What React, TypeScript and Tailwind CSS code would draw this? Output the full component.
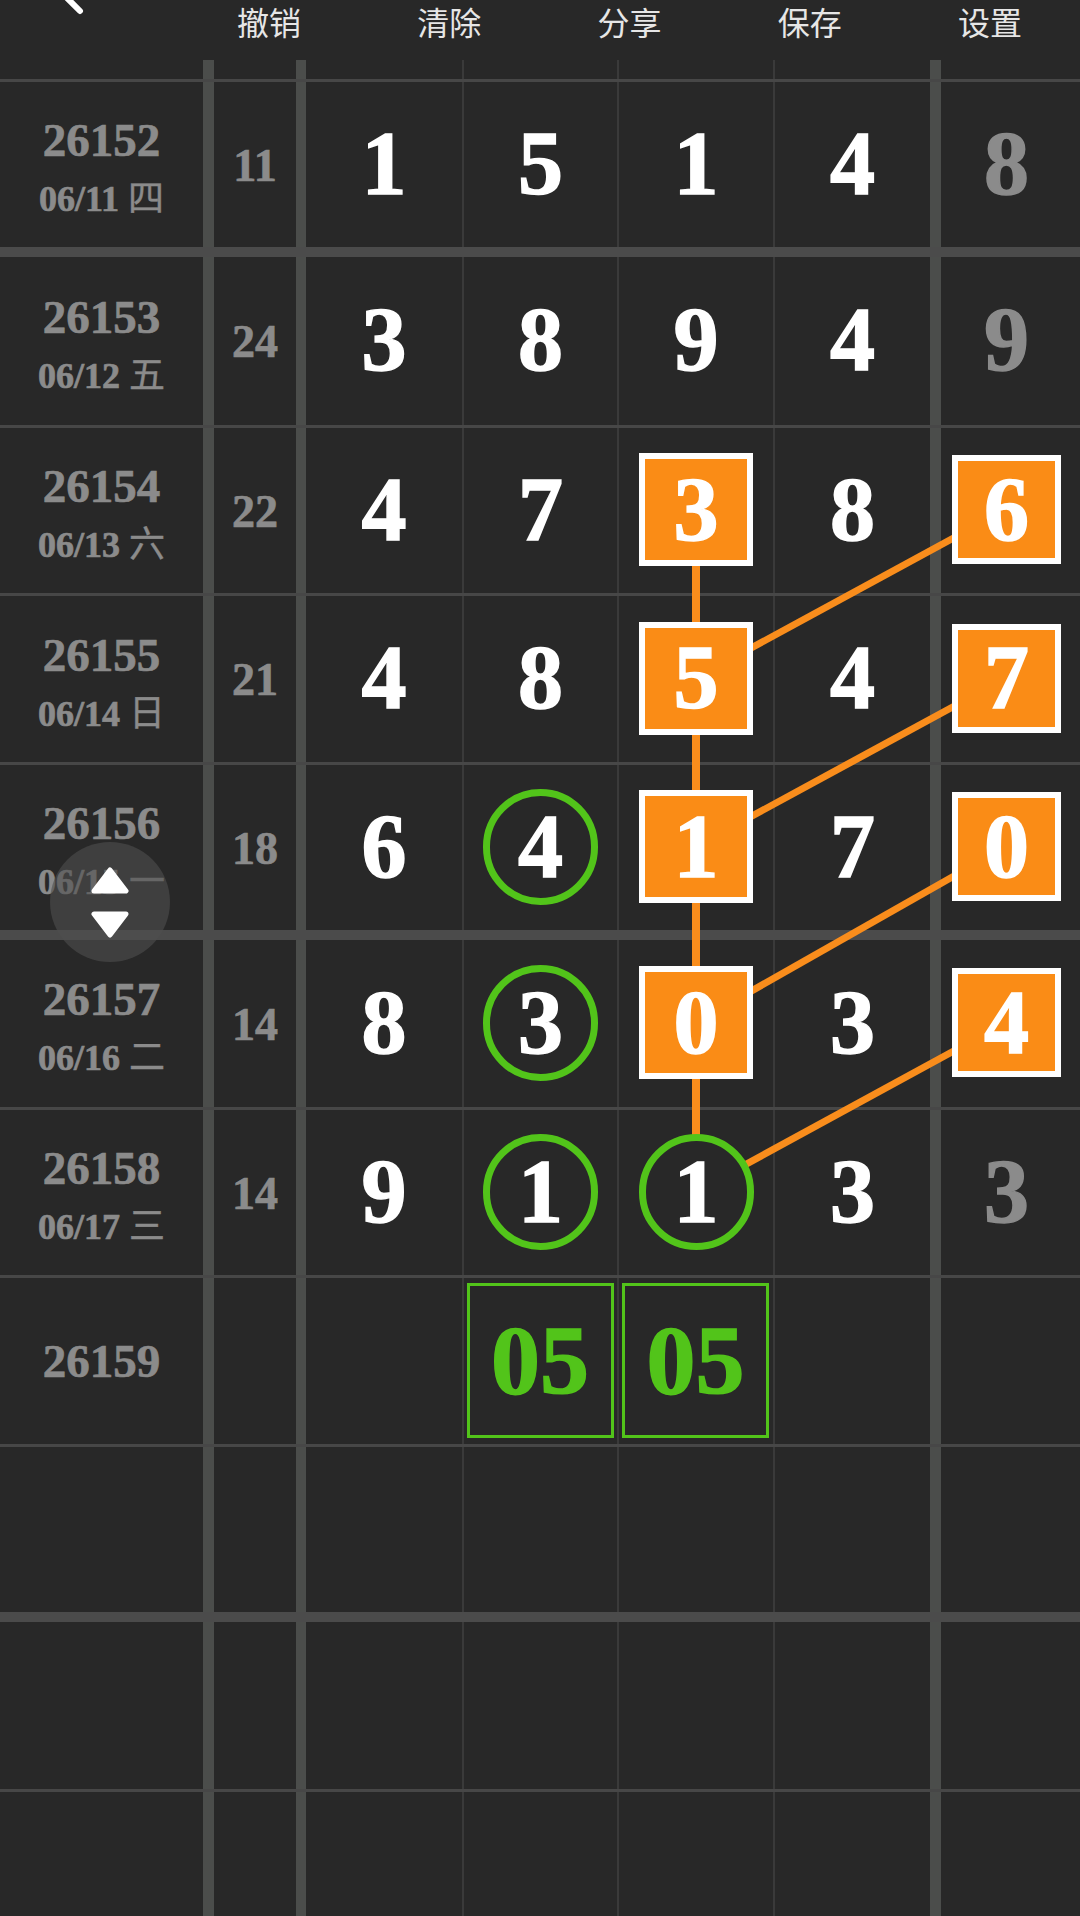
type Mark = 'plain' | 'muted' | 'square' | 'sideSquare' | 'circle' | 'box';

type Draw = { value: string; mark: Mark };

interface DrawRow {
  issue?: string;
  date?: string;
  day?: string;
  sum?: string;
  cells: Draw[];
  height: string;
  thick?: boolean;
}

const p = (value: string): Draw => ({ value, mark: 'plain' });
const m = (value: string): Draw => ({ value, mark: 'muted' });
const s = (value: string): Draw => ({ value, mark: 'square' });
const side = (value: string): Draw => ({ value, mark: 'sideSquare' });
const c = (value: string): Draw => ({ value, mark: 'circle' });
const b = (value: string): Draw => ({ value, mark: 'box' });
const e: Draw = { value: '', mark: 'plain' };

const rows: DrawRow[] = [
  { issue: '26152', date: '06/11', day: '四', sum: '11', cells: [p('1'), p('5'), p('1'), p('4'), m('8')], height: 'h-[175px]', thick: true },
  { issue: '26153', date: '06/12', day: '五', sum: '24', cells: [p('3'), p('8'), p('9'), p('4'), m('9')], height: 'h-[171px]' },
  { issue: '26154', date: '06/13', day: '六', sum: '22', cells: [p('4'), p('7'), s('3'), p('8'), side('6')], height: 'h-[168px]' },
  { issue: '26155', date: '06/14', day: '日', sum: '21', cells: [p('4'), p('8'), s('5'), p('4'), side('7')], height: 'h-[169px]' },
  { issue: '26156', date: '06/15', day: '一', sum: '18', cells: [p('6'), c('4'), s('1'), p('7'), side('0')], height: 'h-[175px]', thick: true },
  { issue: '26157', date: '06/16', day: '二', sum: '14', cells: [p('8'), c('3'), s('0'), p('3'), side('4')], height: 'h-[170px]' },
  { issue: '26158', date: '06/17', day: '三', sum: '14', cells: [p('9'), c('1'), c('1'), p('3'), m('3')], height: 'h-[168px]' },
  { issue: '26159', cells: [e, b('05'), b('05'), e, e], height: 'h-[169px]' },
  { cells: [e, e, e, e, e], height: 'h-[175px]', thick: true },
  { cells: [e, e, e, e, e], height: 'h-[170px]' },
];

const cellWidths = [
  'w-[158px] border-r-2 border-r-[#3a3a3a]',
  'w-[155px] border-r-2 border-r-[#3a3a3a]',
  'w-[156px] border-r-2 border-r-[#3a3a3a]',
  'w-[166px] border-r-[11px] border-r-[#4b4d4b]',
  'flex-1 pr-[8px]',
];

function Number({ value, mark }: Draw) {
  if (mark === 'square') {
    return (
      <div className="relative z-10 flex h-[113px] w-[114px] items-center justify-center border-[6px] border-white bg-[#fa8c16] text-white">
        {value}
      </div>
    );
  }
  if (mark === 'sideSquare') {
    return (
      <div className="relative z-10 flex h-[109px] w-[109px] items-center justify-center border-[6px] border-white bg-[#fa8c16] text-white">
        {value}
      </div>
    );
  }
  if (mark === 'circle') {
    return (
      <div className="relative z-10 flex h-[116px] w-[115px] items-center justify-center rounded-full border-[7px] border-[#52c41a] bg-[#282828] text-white">
        {value}
      </div>
    );
  }
  if (mark === 'box') {
    return (
      <div className="mr-[1px] flex h-[155px] w-[147px] items-center justify-center border-[3px] border-[#52c41a] text-[98px] text-[#52c41a]">
        {value}
      </div>
    );
  }
  return <span className={mark === 'muted' ? 'text-[#8b8b8b]' : 'text-white'}>{value}</span>;
}

function Row({ issue, date, day, sum, cells, height, thick }: DrawRow) {
  return (
    <div
      className={`flex ${height} ${
        thick ? 'border-b-[10px] border-b-[#4b4b4b]' : 'border-b-[3px] border-b-[#474747]'
      }`}
    >
      <div className="flex w-[214px] flex-col items-center justify-center border-r-[11px] border-r-[#4b4d4b] text-[#8b8b8b] [-webkit-text-stroke:0.7px]">
        <div className="text-[47px] leading-[50px] font-bold">{issue}</div>
        {date && (
          <div className="mt-[14px] mb-[-5px] text-[36px] leading-[40px] font-bold whitespace-nowrap">
            {date} <span className="font-normal [-webkit-text-stroke:0.4px]">{day}</span>
          </div>
        )}
      </div>
      <div className="flex w-[92px] items-center justify-center border-r-[10px] border-r-[#4b4d4b] pt-[1px] text-[46px] font-bold text-[#8b8b8b] [-webkit-text-stroke:0.7px]">
        {sum}
      </div>
      {cells.map((cell, i) => (
        <div
          key={i}
          className={`flex items-center justify-center pb-[2px] text-[90px] leading-none font-bold [-webkit-text-stroke:1.5px] ${cellWidths[i]}`}
        >
          <Number {...cell} />
        </div>
      ))}
    </div>
  );
}

export default function App() {
  return (
    <div className="relative h-[1916px] w-[1080px] overflow-hidden bg-[#282828] font-['Liberation_Serif','Noto_Sans_CJK_SC',serif]">
      <header className="flex h-[60px] font-['Noto_Sans_CJK_SC',sans-serif] text-[32px] leading-none text-[#e6e6e6]">
        <div className="w-[179px]">
          <svg className="ml-[60px] block h-[16px] w-[26px]" viewBox="0 0 26 16">
            <path d="M6 -3 L20 11" fill="none" stroke="white" strokeWidth="6" strokeLinecap="round" />
          </svg>
        </div>
        {['撤销', '清除', '分享', '保存', '设置'].map((label) => (
          <div key={label} className="flex-1 pt-[5px] text-center">
            {label}
          </div>
        ))}
      </header>

      <div className="flex h-[22px] border-b-[3px] border-b-[#474747]">
        <div className="w-[214px] border-r-[11px] border-r-[#4b4d4b]" />
        <div className="w-[92px] border-r-[10px] border-r-[#4b4d4b]" />
        {cellWidths.map((width, i) => (
          <div key={i} className={width} />
        ))}
      </div>

      {rows.map((row, i) => (
        <Row key={i} {...row} />
      ))}

      <div className="flex h-[200px]">
        <div className="w-[214px] border-r-[11px] border-r-[#4b4d4b]" />
        <div className="w-[92px] border-r-[10px] border-r-[#4b4d4b]" />
        {cellWidths.map((width, i) => (
          <div key={i} className={width} />
        ))}
      </div>

      {/* trend lines between the marked numbers */}
      <svg className="absolute top-0 left-0 h-[1916px] w-[1080px]" viewBox="0 0 1080 1916">
        <g fill="none" stroke="#f98d1c" strokeWidth="7">
          <path d="M696 509 V1191" strokeWidth="8" />
          <path d="M696 678 L1006 509.5" />
          <path d="M696 846.5 L1006 678" />
          <path d="M696 1022.5 L1006 846.5" />
          <path d="M696 1191.5 L1006 1022.5" />
        </g>
      </svg>

      {/* floating scroll handle */}
      <div className="absolute top-[842px] left-[50px] z-20 flex h-[120px] w-[120px] flex-col items-center justify-center gap-[17px] rounded-full bg-[#4f4f4f]/60">
        <svg className="h-[27px] w-[38px]" viewBox="0 0 38 27">
          <path d="M19 3 L35 24 H3 Z" fill="white" stroke="white" strokeWidth="5" strokeLinejoin="round" />
        </svg>
        <svg className="h-[27px] w-[38px]" viewBox="0 0 38 27">
          <path d="M3 3 H35 L19 24 Z" fill="white" stroke="white" strokeWidth="5" strokeLinejoin="round" />
        </svg>
      </div>
    </div>
  );
}
